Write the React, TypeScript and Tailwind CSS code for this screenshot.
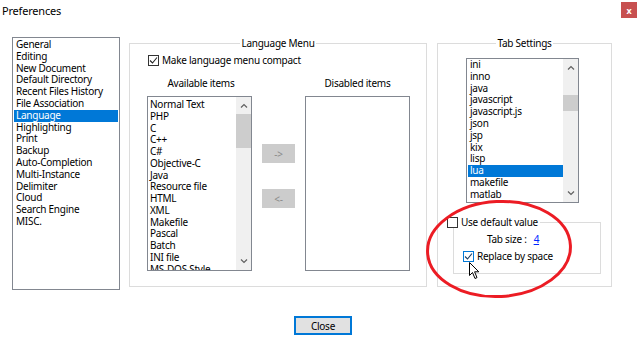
import React from 'react';

const prefItems = [
  'General',
  'Editing',
  'New Document',
  'Default Directory',
  'Recent Files History',
  'File Association',
  'Language',
  'Highlighting',
  'Print',
  'Backup',
  'Auto-Completion',
  'Multi-Instance',
  'Delimiter',
  'Cloud',
  'Search Engine',
  'MISC.'
];

const availableItems = [
  'Normal Text',
  'PHP',
  'C',
  'C++',
  'C#',
  'Objective-C',
  'Java',
  'Resource file',
  'HTML',
  'XML',
  'Makefile',
  'Pascal',
  'Batch',
  'INI file',
  'MS-DOS Style'
];

const tabItems = [
  'ini',
  'inno',
  'java',
  'javascript',
  'javascript.js',
  'json',
  'jsp',
  'kix',
  'lisp',
  'lua',
  'makefile',
  'matlab'
];

const Chevron = ({ up }: { up?: boolean }) => (
  <svg width="8" height="5" viewBox="0 0 8 5">
    <polyline
      points={up ? '1,4.5 4,1.5 7,4.5' : '1,0.5 4,3.5 7,0.5'}
      fill="none"
      stroke="#606060"
      strokeWidth="1.2"
    />
  </svg>
);

// vertical scrollbar: thumbTop is measured from the end of the up button
const ScrollBar = ({ thumbTop, thumbH }: { thumbTop: number; thumbH: number }) => (
  <div className="flex flex-col w-[15px] h-full bg-[#f0f0f0] shrink-0">
    <div className="h-[17px] flex items-center justify-center">
      <Chevron up />
    </div>
    <div className="flex-1">
      <div className="bg-[#cdcdcd] w-full" style={{ marginTop: thumbTop, height: thumbH }} />
    </div>
    <div className="h-[17px] flex items-center justify-center">
      <Chevron />
    </div>
  </div>
);

const CheckBox = ({ checked, hot }: { checked?: boolean; hot?: boolean }) => (
  <span
    className={`inline-flex items-center justify-center w-[11px] h-[11px] bg-white shrink-0 border ${
      hot ? 'border-[#0078d7]' : 'border-[#333333]'
    }`}
  >
    {checked && (
      <svg width="9" height="9" viewBox="0 0 9 9">
        <polyline points="1,4.5 3.5,7 8,1.5" fill="none" stroke={hot ? '#1a3f66' : '#222'} strokeWidth="1.1" />
      </svg>
    )}
  </span>
);

export default function App() {
  return (
    <div
      className="relative w-[640px] h-[344px] bg-white text-[10px] text-black tracking-[-0.25px] overflow-hidden"
      style={{ fontFamily: '"Noto Sans", Roboto, sans-serif' }}
    >
      {/* Title bar */}
      <div className="h-[37px] flex items-start justify-between">
        <span className="pl-[2px] pt-[4px] text-[11px] leading-[14px] tracking-[-0.2px]">Preferences</span>
        <div className="mt-[2px] mr-[3px] w-[16px] h-[16px] bg-[#c75050] flex items-center justify-center text-white text-[9px] font-bold leading-none">
          x
        </div>
      </div>

      <div className="flex items-start">
        {/* Category list */}
        <div className="ml-[12px] w-[108px] h-[253px] border border-[#828790] p-[1px] leading-[11.8px]">
          {prefItems.map((item) => (
            <div
              key={item}
              className={`pl-[2px] h-[11.8px] whitespace-nowrap ${
                item === 'Language' ? 'bg-[#0078d7] text-white' : ''
              }`}
            >
              {item}
            </div>
          ))}
        </div>

        {/* Language Menu */}
        <fieldset className="ml-[9px] w-[298px] h-[250px] border border-[#dcdcdc]">
          <legend className="mx-auto px-[1px] leading-[12px]">Language Menu</legend>
          <div className="flex items-center gap-[3px] ml-[18px] mt-[5px] h-[12px] leading-[12px]">
            <CheckBox checked />
            <span>Make language menu compact</span>
          </div>
          <div className="flex mt-[11px] ml-[17px] h-[12px] leading-[12px]">
            <span className="w-[105px] text-center pl-[3px]">Available items</span>
            <span className="w-[53px]" />
            <span className="w-[105px] text-center">Disabled items</span>
          </div>
          <div className="flex mt-[7px] ml-[17px] h-[175px]">
            <div className="w-[105px] h-full border border-[#828790] flex leading-[11.75px]">
              <div className="flex-1 overflow-hidden pt-[2px]">
                {availableItems.map((item) => (
                  <div key={item} className="pl-[2px] h-[11.75px] whitespace-nowrap">
                    {item}
                  </div>
                ))}
              </div>
              <ScrollBar thumbTop={0} thumbH={34} />
            </div>
            <div className="ml-[10px] w-[33px] flex flex-col">
              <div className="mt-[48px] h-[19px] bg-[#cccccc] text-[#8a8a8a] flex items-center justify-center leading-none">
                -&gt;
              </div>
              <div className="mt-[26px] h-[19px] bg-[#cccccc] text-[#8a8a8a] flex items-center justify-center leading-none">
                &lt;-
              </div>
            </div>
            <div className="ml-[10px] w-[105px] h-full border border-[#828790]" />
          </div>
        </fieldset>

        {/* Tab Settings */}
        <fieldset className="ml-[10px] w-[175px] h-[250px] border border-[#dcdcdc]">
          <legend className="mx-auto px-[1px] leading-[12px]">Tab Settings</legend>
          <div className="ml-[28px] mt-[9px] w-[113px] h-[145px] border border-[#828790] flex leading-[11.8px]">
            <div className="flex-1 overflow-hidden">
              {tabItems.map((item) => (
                <div
                  key={item}
                  className={`ml-[1px] pl-[2px] h-[11.8px] whitespace-nowrap ${
                    item === 'lua' ? 'bg-[#0078d7] text-white' : ''
                  }`}
                >
                  {item}
                </div>
              ))}
            </div>
            <ScrollBar thumbTop={19} thumbH={16} />
          </div>

          <fieldset className="ml-[15px] mt-[13px] w-[148px] h-[58px] border border-[#dcdcdc]">
            <legend className="ml-[-7px] pr-[2px] flex items-center gap-[3px] h-[12px] leading-[12px]">
              <CheckBox />
              <span>Use default value</span>
            </legend>
            <div className="flex items-center mt-[5px] ml-[33px] h-[12px] leading-[12px]">
              <span>Tab size :</span>
              <span className="ml-[7px] text-[#0026ff] underline">4</span>
            </div>
            <div className="flex items-center gap-[3px] mt-[5px] ml-[9px] h-[12px] leading-[12px]">
              <CheckBox checked hot />
              <span>Replace by space</span>
            </div>
          </fieldset>
        </fieldset>
      </div>

      {/* Close button */}
      <div className="mt-[26px] ml-[294px] w-[58px] h-[19px] border-2 border-[#0078d7] bg-[#e1e1e1] flex items-center justify-center leading-none">
        Close
      </div>

      {/* Annotation overlay: red ellipse */}
      <svg className="absolute left-0 top-0 pointer-events-none" width="640" height="344">
        <ellipse
          cx="499"
          cy="249"
          rx="71.5"
          ry="47.5"
          fill="none"
          stroke="#ec1c24"
          strokeWidth="3"
          transform="rotate(-3 499 249)"
        />
      </svg>

      {/* Mouse pointer */}
      <svg className="absolute left-[469px] top-[262px]" width="12" height="18" viewBox="0 0 12 18">
        <path
          d="M0.5,0.5 L0.5,13.5 L3.5,10.5 L6,16.5 L8,15.6 L5.6,9.8 L9.8,9.8 Z"
          fill="#fff"
          stroke="#000"
          strokeWidth="1"
          strokeLinejoin="round"
        />
      </svg>
    </div>
  );
}
